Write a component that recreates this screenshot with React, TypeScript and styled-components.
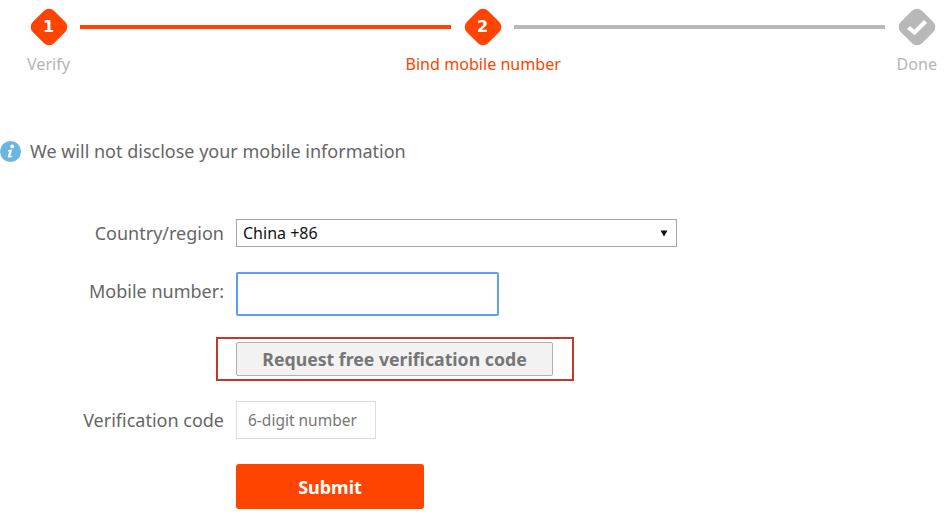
import styled, { createGlobalStyle } from 'styled-components'

const GlobalStyle = createGlobalStyle`
  html, body {
    margin: 0;
    padding: 0;
    background: #fff;
  }
  * {
    box-sizing: border-box;
  }
`

const ORANGE = '#ff4400'
const GREY = '#b8b8b8'

export default function App () {
  return (
    <Page>
      <GlobalStyle />
      <Stepper>
        <Rail>
          <Marker $color={ORANGE}><span>1</span></Marker>
          <RailLine $color={ORANGE} />
          <Marker $color={ORANGE}><span>2</span></Marker>
          <RailLine $color={GREY} />
          <Marker $color={GREY}>
            <svg width='22' height='18' viewBox='0 0 22 18'>
              <path d='M2.5 9.5 L8.5 14.5 L19.5 3.5' fill='none' stroke='#fff' strokeWidth='4.2' />
            </svg>
          </Marker>
        </Rail>
        <StepLabels>
          <StepLabel>Verify</StepLabel>
          <StepLabel $active>Bind mobile number</StepLabel>
          <StepLabel>Done</StepLabel>
        </StepLabels>
      </Stepper>

      <Notice>
        <svg width='21' height='21' viewBox='0 0 21 21'>
          <circle cx='10.5' cy='10.5' r='10.5' fill='#6bb5e4' />
          <circle cx='12.2' cy='5.4' r='1.9' fill='#fff' />
          <path d='M8 9.2 L12.2 8.6 L10.4 14.8 C10.3 15.4 10.8 15.4 12.2 14.4 L12.4 15.2 C10.6 16.6 7.4 17.4 7.9 15 L9.2 10.6 L7.9 10.4 Z' fill='#fff' />
        </svg>
        <span>We will not disclose your mobile information</span>
      </Notice>

      <Form onSubmit={event => event.preventDefault()}>
        <FieldLabel>Country/region</FieldLabel>
        <SelectWrap>
          <Select defaultValue='86'>
            <option value='86'>China +86</option>
          </Select>
          <SelectArrow width='8' height='7' viewBox='0 0 8 7'>
            <path d='M0.5 0.5 H7.5 L4 6.5 Z' fill='#111' />
          </SelectArrow>
        </SelectWrap>

        <FieldLabel $raised>Mobile number:</FieldLabel>
        <MobileInput type='text' />

        <span />
        <RequestButton type='button'>Request free verification code</RequestButton>

        <FieldLabel>Verification code</FieldLabel>
        <CodeInput type='text' placeholder='6-digit number' />

        <span />
        <SubmitButton type='submit'>Submit</SubmitButton>
      </Form>
    </Page>
  )
}

const fontStack = '"Noto Sans", "Open Sans", sans-serif'

const Page = styled.div`
  width: 947px;
  height: 523px;
  overflow: hidden;
  padding-top: 8px;
  font-family: ${fontStack};
  color: #666;
`

const Stepper = styled.div`
  display: flex;
  flex-direction: column;
`

const Rail = styled.div`
  display: flex;
  align-items: center;
  gap: 13px;
  padding: 0 12px 0 30px;
`

const RailLine = styled.div<{ $color: string }>`
  flex: 1;
  height: 4px;
  margin-top: 1px;
  background: ${props => props.$color};
`

const Marker = styled.div<{ $color: string }>`
  position: relative;
  width: 37px;
  height: 37px;
  display: flex;
  align-items: center;
  justify-content: center;
  font-family: "DejaVu Sans", sans-serif;
  font-size: 16px;
  font-weight: 700;
  color: #fff;

  &::before {
    content: '';
    position: absolute;
    top: 3.5px;
    left: 3.5px;
    width: 30px;
    height: 30px;
    border-radius: 7px;
    transform: rotate(45deg);
    background: ${props => props.$color};
  }

  > * {
    position: relative;
  }
`

const StepLabels = styled.div`
  display: flex;
  justify-content: space-between;
  padding: 7px 10px 0 27px;
`

const StepLabel = styled.span<{ $active?: boolean }>`
  font-size: 16.1px;
  line-height: 24px;
  color: ${props => props.$active ? ORANGE : '#b5b5b5'};
`

const Notice = styled.div`
  display: flex;
  align-items: center;
  gap: 9px;
  margin-top: 62px;
  font-size: 18px;
  line-height: 26px;
  color: #666;
`

const Form = styled.form`
  display: grid;
  grid-template-columns: 224px max-content;
  gap: 25px 12px;
  align-items: center;
  justify-items: start;
  margin-top: 55px;
`

const FieldLabel = styled.label<{ $raised?: boolean }>`
  justify-self: end;
  padding-bottom: ${props => props.$raised ? '6px' : '0'};
  font-size: 18px;
  color: #666;
`

const SelectWrap = styled.div`
  position: relative;
  width: 441px;
  height: 28px;
`

const Select = styled.select`
  appearance: none;
  width: 100%;
  height: 100%;
  padding: 0 0 0 6px;
  border: 1px solid #a6a6a6;
  border-radius: 0;
  background: #fff;
  font-family: ${fontStack};
  font-size: 16px;
  color: #111;
`

const SelectArrow = styled.svg`
  position: absolute;
  top: 11px;
  right: 9px;
  pointer-events: none;
`

const MobileInput = styled.input`
  width: 263px;
  height: 44px;
  border: 2px solid #5c9ef5;
  border-radius: 2px;
  outline: none;
  background: #fff;
`

const RequestButton = styled.button`
  position: relative;
  width: 317px;
  height: 34px;
  margin-top: 1px;
  padding: 0;
  border: 1px solid #b0b0b0;
  border-radius: 2px;
  background: #f2f2f2;
  font-family: ${fontStack};
  font-size: 17.7px;
  font-weight: 700;
  color: #767676;

  &::after {
    content: '';
    box-sizing: border-box;
    position: absolute;
    top: -6px;
    left: -21px;
    width: 358px;
    height: 44px;
    border: 2px solid #c0392b;
  }
`

const CodeInput = styled.input`
  width: 140px;
  height: 38px;
  padding: 0 11px;
  border: 1px solid #dcdcdc;
  outline: none;
  background: #fff;
  font-family: ${fontStack};
  font-size: 15.5px;

  &::placeholder {
    color: #777;
    opacity: 1;
  }
`

const SubmitButton = styled.button`
  width: 188px;
  height: 45px;
  padding: 0;
  border: none;
  border-radius: 3px;
  background: ${ORANGE};
  font-family: ${fontStack};
  font-size: 18px;
  font-weight: 700;
  color: #fff;
`
